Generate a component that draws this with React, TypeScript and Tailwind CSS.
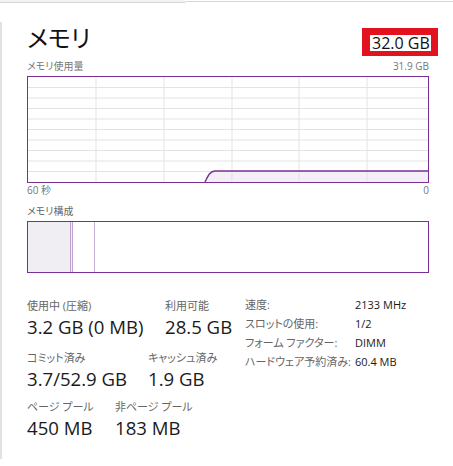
import React from 'react';

const latin = "font-['Open_Sans','Noto_Sans_CJK_JP',sans-serif] [font-feature-settings:'palt']";

const hLines = [1, 2, 3, 4, 5, 6, 7, 8, 9].map(k => k * 10.5);
const vLines = [68, 136, 204, 271, 339];

const UsageGraph = () => (
  <div className="h-[107px] w-[402px] border border-[#7a2f96] bg-white">
    <svg viewBox="0 0 400 105" preserveAspectRatio="none" className="block h-full w-full">
      <path d="M177,105 C180,99 182,94 187,94 L400,94 L400,105 Z" fill="#f4eef6" />
      {hLines.map(y => (
        <line key={`h${y}`} x1="0" x2="400" y1={y} y2={y} stroke="#e3e3e3" strokeWidth="1" />
      ))}
      {vLines.map(x => (
        <line key={`v${x}`} x1={x} x2={x} y1="0" y2="105" stroke="#e3e3e3" strokeWidth="1" />
      ))}
      <path d="M177,105 C180,99 182,94 187,94 L400,94" fill="none" stroke="#7a2f96" strokeWidth="1.4" />
    </svg>
  </div>
);

const CompositionBar = () => (
  <div className="flex h-[52px] w-[402px] border border-[#7a2f96] bg-white">
    <div className="w-[42px] bg-[#f1eef3]" />
    <div className="w-px bg-[#bfa2cc]" />
    <div className="w-px bg-[#f1eef3]" />
    <div className="w-px bg-[#bfa2cc]" />
    <div className="w-[21px]" />
    <div className="w-px bg-[#c8b0d3]" />
  </div>
);

const Stat = ({ label, value, width }: { label: string; value: string; width: string }) => (
  <div className={`${width} shrink-0`}>
    <div className="h-4 text-[11px] leading-4 whitespace-nowrap text-[#666]">{label}</div>
    <div className="h-[26px] text-[18.6px] leading-[26px] whitespace-nowrap text-[#1a1a1a]">{value}</div>
  </div>
);

const specs = [
  ['速度:', '2133 MHz'],
  ['スロットの使用:', '1/2'],
  ['フォーム ファクター:', 'DIMM'],
  ['ハードウェア予約済み:', '60.4 MB'],
];

export default function App() {
  return (
    <div className={`relative h-[466px] w-[453px] overflow-hidden bg-white ${latin}`}>
      <div className="flex h-[3px]">
        <div className="h-[3px] w-[185px] border-b border-[#d4d4d4] bg-[#f3f3f3]" />
        <div className="h-[2px] flex-1 border-b border-[#d6d6d6]" />
      </div>
      <div className="mt-[19px] h-[437px] border-l-2 border-[#e2e2e2] pr-[24px] pl-[25px]">
        <div className="flex h-[36px] items-start justify-between">
          <div className="text-[24px] leading-[32px] text-[#111]">メモリ</div>
          <div className="mt-[6px] mr-[-9px] flex h-[28px] w-[76px] items-start bg-[#e3121f] pt-[7px] pl-[8px]">
            <span className="block h-[16px] bg-white pr-[1px] pl-[2px] text-[16px] leading-[16px] text-[#111]">32.0 GB</span>
          </div>
        </div>
        <div className="mt-[1px] flex h-[15px] items-center justify-between text-[10px] leading-[15px] text-[#777]">
          <span>メモリ使用量</span>
          <span>31.9 GB</span>
        </div>
        <div className="mt-[2px]">
          <UsageGraph />
        </div>
        <div className="flex h-[15px] w-[402px] items-center justify-between text-[10px] leading-[15px] text-[#777]">
          <span>60 秒</span>
          <span>0</span>
        </div>
        <div className="mt-[6px] h-[15px] text-[10px] leading-[15px] text-[#666]">メモリ構成</div>
        <div className="mt-[2px]">
          <CompositionBar />
        </div>
        <div className="mt-[25px] flex items-start">
          <div className="w-[218px]">
            <div className="flex">
              <Stat label="使用中 (圧縮)" value="3.2 GB (0 MB)" width="w-[138px]" />
              <Stat label="利用可能" value="28.5 GB" width="w-[70px]" />
            </div>
            <div className="mt-[10px] flex">
              <Stat label="コミット済み" value="3.7/52.9 GB" width="w-[121px]" />
              <Stat label="キャッシュ済み" value="1.9 GB" width="w-[80px]" />
            </div>
            <div className="mt-[7px] flex">
              <Stat label="ページ プール" value="450 MB" width="w-[88px]" />
              <Stat label="非ページ プール" value="183 MB" width="w-[90px]" />
            </div>
          </div>
          <div className="mt-[-3px] grid grid-cols-[110px_auto] content-start text-[11px] leading-[19px]">
            {specs.map(([label, value]) => (
              <React.Fragment key={label}>
                <span className="whitespace-nowrap text-[#666]">{label}</span>
                <span className="whitespace-nowrap text-[#1a1a1a]">{value}</span>
              </React.Fragment>
            ))}
          </div>
        </div>
      </div>
    </div>
  );
}
